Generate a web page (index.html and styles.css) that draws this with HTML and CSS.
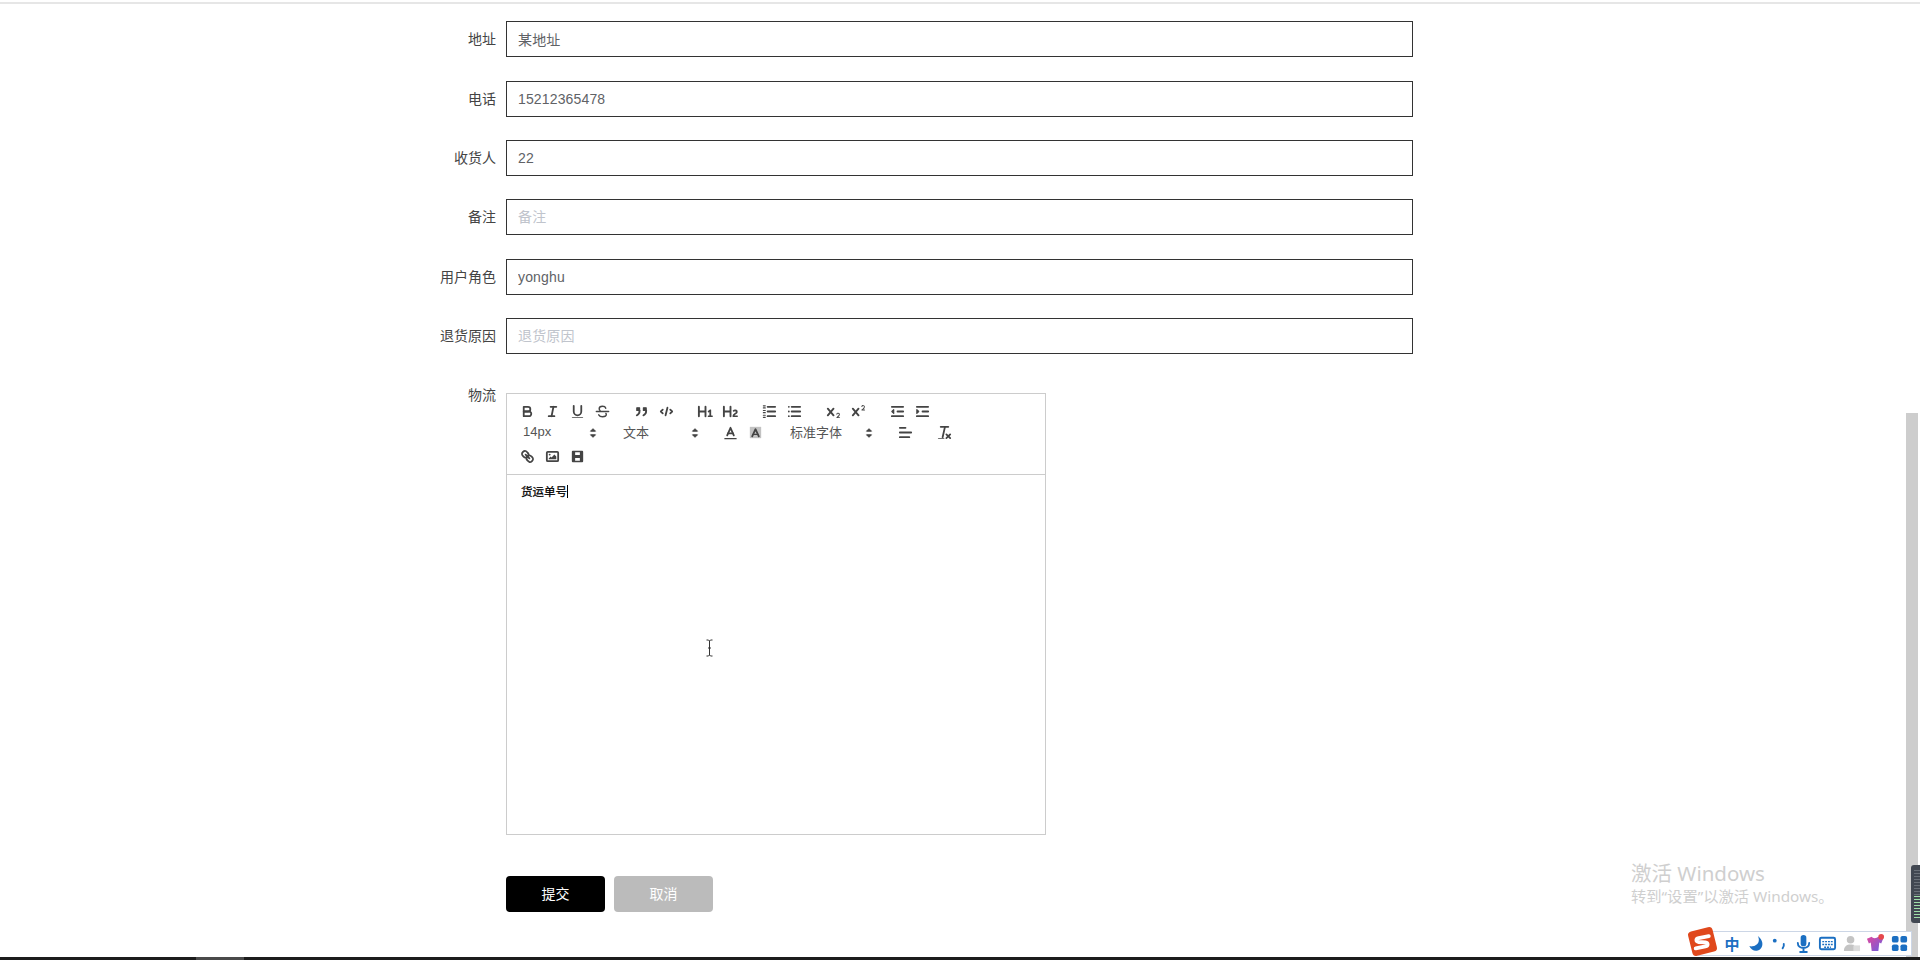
FILE: index.html
```html
<!DOCTYPE html>
<html lang="zh-CN">
<head>
<meta charset="utf-8">
<title>表单</title>
<link rel="stylesheet" href="styles.css">
</head>
<body>
<div class="page">
  <div class="topline"></div>
  <main class="form">
    <div class="row"><label class="label">地址</label><input class="input" value="某地址"></div>
    <div class="row"><label class="label">电话</label><input class="input" value="15212365478"></div>
    <div class="row"><label class="label">收货人</label><input class="input" value="22"></div>
    <div class="row"><label class="label">备注</label><input class="input" placeholder="备注"></div>
    <div class="row"><label class="label">用户角色</label><input class="input" value="yonghu"></div>
    <div class="row"><label class="label">退货原因</label><input class="input" placeholder="退货原因"></div>
    <div class="row row-editor">
      <label class="label">物流</label>
      <div class="editor">
        <div class="toolbar">
          <div class="tool-row">
            <div class="group">
              <button class="tb"><svg viewBox="0 0 18 18"><path class="st" d="M5,4H9.5A2.5,2.5,0,0,1,12,6.5v0A2.5,2.5,0,0,1,9.5,9H5V4Z"/><path class="st" d="M5,9h5.5A2.5,2.5,0,0,1,13,11.5v0A2.5,2.5,0,0,1,10.5,14H5V9Z"/></svg></button>
              <button class="tb"><svg viewBox="0 0 18 18"><line class="st" x1="7" x2="13" y1="4" y2="4"/><line class="st" x1="5" x2="11" y1="14" y2="14"/><line class="st" x1="8" x2="10" y1="14" y2="4"/></svg></button>
              <button class="tb"><svg viewBox="0 0 18 18"><path class="st" d="M5,3V9a4.012,4.012,0,0,0,4,4H9a4.012,4.012,0,0,0,4-4V3"/><rect class="fl" height="1" rx=".5" width="12" x="3" y="15"/></svg></button>
              <button class="tb"><svg viewBox="0 0 18 18"><line class="st mid" x1="15.5" x2="2.5" y1="9" y2="9"/><path class="st mid" d="M12.5 5.5C12 4 10.5 3.5 9 3.5c-2 0-3.5 1-3.5 2.5 0 .8.3 1.4.9 1.9"/><path class="st mid" d="M12.6 11c.2.4.4.8.4 1.2 0 1.6-1.800 2.300-4 2.300-1.700 0-3.200-.6-4-2"/></svg></button>
            </div>
            <div class="group">
              <button class="tb"><svg viewBox="0 0 18 18"><rect class="fl st thin" height="3" width="3" x="4" y="5"/><rect class="fl st thin" height="3" width="3" x="11" y="5"/><path class="st" d="M7,8c0,4.031-3,5-3,5"/><path class="st" d="M14,8c0,4.031-3,5-3,5"/></svg></button>
              <button class="tb"><svg viewBox="0 0 18 18"><polyline class="st" points="5 7 3 9 5 11"/><polyline class="st" points="13 7 15 9 13 11"/><line class="st" x1="10" x2="8" y1="5" y2="13"/></svg></button>
            </div>
            <div class="group">
              <button class="tb"><svg viewBox="0 0 18 18"><path class="fl" d="M10,4V14a1,1,0,0,1-2,0V10H3v4a1,1,0,0,1-2,0V4A1,1,0,0,1,3,4V8H8V4a1,1,0,0,1,2,0Zm6.06787,9.209H14.98975V7.59863a.54085.54085,0,0,0-.605-.60547h-.62744a1.01119,1.01119,0,0,0-.748.29688L11.645,8.56641a.5435.5435,0,0,0-.022.8584l.28613.30762a.53861.53861,0,0,0,.84717.0332l.09912-.08789a1.2137,1.2137,0,0,0,.2417-.35254h.02246s-.01123.30859-.01123.60547V13.209H12.041a.54085.54085,0,0,0-.605.60547v.43945a.54085.54085,0,0,0,.605.60547h4.02686a.54085.54085,0,0,0,.605-.60547v-.43945A.54085.54085,0,0,0,16.06787,13.209Z"/></svg></button>
              <button class="tb"><svg viewBox="0 0 18 18"><path class="fl" d="M16.73975,13.81445v.43945a.54085.54085,0,0,1-.605.60547H11.855a.58392.58392,0,0,1-.64893-.60547V14.0127c0-2.90527,3.39941-3.42187,3.39941-4.55469a.77675.77675,0,0,0-.84717-.78125,1.17684,1.17684,0,0,0-.83594.38477c-.2749.26367-.561.374-.85791.13184l-.4292-.34082c-.30811-.24219-.38525-.51758-.1543-.81445a2.97155,2.97155,0,0,1,2.45361-1.17676,2.45393,2.45393,0,0,1,2.68408,2.40918c0,2.45312-3.1792,2.92676-3.27832,3.93848h2.79443A.54085.54085,0,0,1,16.73975,13.81445ZM9,3A.99974.99974,0,0,0,8,4V8H3V4A1,1,0,0,0,1,4V14a1,1,0,0,0,2,0V10H8v4a1,1,0,0,0,2,0V4A.99974.99974,0,0,0,9,3Z"/></svg></button>
            </div>
            <div class="group">
              <button class="tb"><svg viewBox="0 0 18 18"><line class="st" x1="7" x2="15" y1="4" y2="4"/><line class="st" x1="7" x2="15" y1="9" y2="9"/><line class="st" x1="7" x2="15" y1="14" y2="14"/><line class="st thin" x1="2.5" x2="4.5" y1="3" y2="3"/><line class="st thin" x1="2.5" x2="4.5" y1="5.2" y2="5.2"/><line class="st thin" x1="2.5" x2="4.5" y1="8" y2="8"/><line class="st thin" x1="2.5" x2="4.5" y1="10.2" y2="10.2"/><line class="st thin" x1="2.5" x2="4.5" y1="13" y2="13"/><line class="st thin" x1="2.5" x2="4.5" y1="15.2" y2="15.2"/></svg></button>
              <button class="tb"><svg viewBox="0 0 18 18"><line class="st" x1="6" x2="15" y1="4" y2="4"/><line class="st" x1="6" x2="15" y1="9" y2="9"/><line class="st" x1="6" x2="15" y1="14" y2="14"/><line class="st" x1="3" x2="3" y1="4" y2="4"/><line class="st" x1="3" x2="3" y1="9" y2="9"/><line class="st" x1="3" x2="3" y1="14" y2="14"/></svg></button>
            </div>
            <div class="group">
              <button class="tb"><svg viewBox="0 0 18 18"><path class="fl" d="M15.5,15H13.861a3.858,3.858,0,0,0,1.914-2.975,1.8,1.8,0,0,0-1.6-1.751A1.921,1.921,0,0,0,12.021,11.7a0.50013,0.50013,0,1,0,.957.291h0a0.914,0.914,0,0,1,1.053-.725,0.81,0.81,0,0,1,.744.762c0,1.076-1.16971,1.86982-1.93971,2.43082A1.45639,1.45639,0,0,0,12,15.5a0.5,0.5,0,0,0,.5.5h3A0.5,0.5,0,0,0,15.5,15Z"/><path class="fl" d="M9.65,5.241a1,1,0,0,0-1.409.108L6,7.964,3.759,5.349A1,1,0,0,0,2.192,6.59178Q2.21541,6.6213,2.241,6.649L4.684,9.5,2.241,12.35A1,1,0,0,0,3.71,13.70722q0.02557-.02768.049-0.05722L6,11.036,8.241,13.65a1,1,0,1,0,1.567-1.24277Q9.78459,12.3777,9.759,12.35L7.316,9.5,9.759,6.651A1,1,0,0,0,9.65,5.241Z"/></svg></button>
              <button class="tb"><svg viewBox="0 0 18 18"><path class="fl" d="M15.5,7H13.861a4.015,4.015,0,0,0,1.914-2.975,1.8,1.8,0,0,0-1.6-1.751A1.922,1.922,0,0,0,12.021,3.7a0.5,0.5,0,1,0,.957.291,0.917,0.917,0,0,1,1.053-.725,0.81,0.81,0,0,1,.744.762c0,1.077-1.164,1.925-1.934,2.486A1.423,1.423,0,0,0,12,7.5a0.5,0.5,0,0,0,.5.5h3A0.5,0.5,0,0,0,15.5,7Z"/><path class="fl" d="M9.65,5.241a1,1,0,0,0-1.409.108L6,7.964,3.759,5.349A1,1,0,0,0,2.192,6.59178Q2.21541,6.6213,2.241,6.649L4.684,9.5,2.241,12.35A1,1,0,0,0,3.71,13.70722q0.02557-.02768.049-0.05722L6,11.036,8.241,13.65a1,1,0,1,0,1.567-1.24277Q9.78459,12.3777,9.759,12.35L7.316,9.5,9.759,6.651A1,1,0,0,0,9.65,5.241Z"/></svg></button>
            </div>
            <div class="group">
              <button class="tb"><svg viewBox="0 0 18 18"><line class="st" x1="3" x2="15" y1="14" y2="14"/><line class="st" x1="3" x2="15" y1="4" y2="4"/><line class="st" x1="9" x2="15" y1="9" y2="9"/><polyline class="fl st thin" points="5 7 5 11 3 9 5 7"/></svg></button>
              <button class="tb"><svg viewBox="0 0 18 18"><line class="st" x1="3" x2="15" y1="14" y2="14"/><line class="st" x1="3" x2="15" y1="4" y2="4"/><line class="st" x1="9" x2="15" y1="9" y2="9"/><polyline class="fl st thin" points="3 7 3 11 5 9 3 7"/></svg></button>
            </div>
          </div>
          <div class="tool-row tool-row-2">
            <div class="picker picker-size"><span>14px</span><svg viewBox="0 0 18 18"><polygon class="arrow" points="6.500 10.800 9 13.300 11.500 10.800"/><polygon class="arrow" points="6.500 7.200 9 4.700 11.500 7.200"/></svg></div>
            <div class="picker picker-header"><span>文本</span><svg viewBox="0 0 18 18"><polygon class="arrow" points="6.500 10.800 9 13.300 11.500 10.800"/><polygon class="arrow" points="6.500 7.200 9 4.700 11.500 7.200"/></svg></div>
            <div class="group group-color">
              <button class="tb"><svg viewBox="0 0 18 18"><line class="st thin" x1="3" x2="15" y1="15.5" y2="15.5"/><polyline class="st" points="5.5 12 9 4 12.5 12"/><line class="st" x1="11.63" x2="6.38" y1="10" y2="10"/></svg></button>
              <button class="tb"><svg viewBox="0 0 18 18"><rect class="dots" x="3" y="3" width="12" height="12"/><polyline class="st" points="5.5 13 9 5.5 12.5 13"/><line class="st thin" x1="11.5" x2="6.5" y1="11" y2="11"/></svg></button>
            </div>
            <div class="picker picker-font"><span>标准字体</span><svg viewBox="0 0 18 18"><polygon class="arrow" points="6.500 10.800 9 13.300 11.500 10.800"/><polygon class="arrow" points="6.500 7.200 9 4.700 11.500 7.200"/></svg></div>
            <div class="group group-align">
              <button class="tb"><svg viewBox="0 0 18 18"><line class="st" x1="3" x2="15" y1="9" y2="9"/><line class="st" x1="3" x2="13" y1="14" y2="14"/><line class="st" x1="3" x2="9" y1="4" y2="4"/></svg></button>
            </div>
            <div class="group">
              <button class="tb"><svg viewBox="0 0 18 18"><line class="st" x1="5" x2="13" y1="3" y2="3"/><line class="st" x1="9.5" x2="7" y1="3" y2="14"/><line class="st" x1="11" x2="15" y1="11" y2="15"/><line class="st" x1="15" x2="11" y1="11" y2="15"/><rect class="fl" height="1" rx=".5" width="7" x="2" y="15"/></svg></button>
            </div>
          </div>
          <div class="tool-row tool-row-3">
            <button class="tb"><svg viewBox="0 0 18 18"><line class="st" x1="7" x2="11" y1="7" y2="11"/><path class="st" d="M8.9,4.577a3.476,3.476,0,0,1,.36,4.679A3.476,3.476,0,0,1,4.577,8.9C3.185,7.5,2.035,6.4,4.217,4.217S7.5,3.185,8.9,4.577Z"/><path class="st" d="M13.423,9.1a3.476,3.476,0,0,0-4.679-.36,3.476,3.476,0,0,0,.36,4.679c1.392,1.392,2.5,2.542,4.679.36S14.815,10.5,13.423,9.1Z"/></svg></button>
            <button class="tb"><svg viewBox="0 0 18 18"><rect class="st" height="10" width="12" x="3" y="4" rx="1"/><circle class="fl" cx="6" cy="7" r="1"/><polyline class="fl" points="5 12 5 11 7 9 8 10 11 7 13 9 13 12 5 12"/></svg></button>
            <button class="tb"><svg viewBox="0 0 18 18"><path class="fl" fill-rule="evenodd" d="M4 3h10a1 1 0 0 1 1 1v10a1 1 0 0 1-1 1H4a1 1 0 0 1-1-1V4a1 1 0 0 1 1-1Zm2.5 1.5v3h5v-3Zm0 6v3h5v-3Z"/></svg></button>
          </div>
        </div>
        <div class="content"><p class="content-text">货运单号<span class="caret"></span></p></div>
      </div>
    </div>
    <div class="actions">
      <button class="btn btn-primary">提交</button>
      <button class="btn btn-cancel">取消</button>
    </div>
  </main>
  <div class="taskbar"><span class="task-item"></span></div>

  <div class="scrollbar"></div>
  <svg class="ibeam" viewBox="0 0 9 18"><path d="M1.5 1h2l1 1 1-1h2M4.5 2v14M1.5 17h2l1-1 1 1h2M3 9h3"/></svg>
  <div class="watermark">
    <div class="wm-title">激活 Windows</div>
    <div class="wm-sub">转到“设置”以激活 Windows。</div>
  </div>
  <div class="meter">
    <div class="meter-dim"></div>
    <div class="meter-green"></div>
  </div>
  <div class="ime">
    <svg class="ime-logo" viewBox="0 0 32 32"><rect x="3" y="3" width="26" height="26" rx="4" transform="rotate(-14 16 16)"/><path d="M22.5 10.5 12 12.5c-3 .6-3 3.6 0 4l7 .4c3 .4 3 3.6 0 4.2L9 23"/></svg>
    <span class="ime-zh">中</span>
    <svg class="ime-icon" viewBox="0 0 20 20"><path class="ime-fill" d="M12.5 2c2.5 5 .5 10-6 11-1 .1-2 0-3-.4C5 16.5 8.5 18 11.500 17.500c5-.8 7-6 5-10.500-.9-2-2.500-4-4-5Z"/></svg>
    <svg class="ime-icon" viewBox="0 0 20 20"><circle class="ime-fill" cx="5" cy="7" r="2"/><path class="ime-line" d="M14.500 10.500c.4 1.800-.1 3.300-1.200 4.500"/></svg>
    <svg class="ime-icon" viewBox="0 0 20 20"><rect class="ime-fill" x="7" y="1" width="6" height="12" rx="3"/><path class="ime-line" d="M4 9.500c0 7 12 7 12 0M10 15v4M6.500 19h7"/></svg>
    <svg class="ime-icon" viewBox="0 0 20 20"><rect class="ime-line" x="2" y="4" width="16" height="12" rx="1.500"/><path class="ime-dash" d="M4.500 8h11M4.500 11h11M6.500 14h7"/></svg>
    <svg class="ime-icon" viewBox="0 0 20 20"><circle class="ime-grey" cx="9" cy="6" r="4"/><path class="ime-grey" d="M2 18c0-5 3-7 7-7s4 1 4 2v5Z"/><rect class="ime-grey-light" x="12" y="12" width="7" height="6"/></svg>
    <svg class="ime-icon" viewBox="0 0 20 20"><defs><linearGradient id="shirt" x1="0" y1="0" x2="1" y2="1"><stop offset="0" stop-color="#e0479e"/><stop offset="1" stop-color="#6a5fe0"/></linearGradient></defs><path fill="url(#shirt)" d="M1 5l5-2c1 2 5 2 7 0l5 2-2 5-2-1-1 9H6L5 9 3 10Z"/><circle class="ime-dot" cx="16" cy="3" r="3"/></svg>
    <svg class="ime-icon" viewBox="0 0 20 20"><rect class="ime-fill" x="2" y="2" width="7" height="7" rx="2"/><rect class="ime-fill" x="11" y="2" width="7" height="7" rx="2"/><rect class="ime-fill" x="2" y="11" width="7" height="7" rx="2"/><rect class="ime-fill" x="11" y="11" width="7" height="7" rx="2"/></svg>
  </div>
</div>
</body>
</html>
```

FILE: styles.css
```css
* { box-sizing: border-box; }
html, body { margin: 0; padding: 0; background: #fff; }
body { font-family: "Liberation Sans", "Noto Sans CJK SC", sans-serif; font-size: 14px; color: #333; }
.page { position: relative; display: flex; flex-direction: column; height: 960px; overflow: hidden; }
.topline { height: 2px; margin-top: 2px; background: #e6e6e6; }

.form { padding: 17.2px 0 0 400px; }
.row { display: flex; gap: 10px; margin-bottom: 23.4px; }
.label { width: 96px; flex: none; line-height: 36px; text-align: right; color: #444; font-size: 14px; }
.row-editor .label { line-height: 34px; }
.input { width: 907px; height: 36px; padding: 0 11px; border: 1px solid #333; border-radius: 0; outline: none; background: #fff; font: 14px "Liberation Sans", "Noto Sans CJK SC", sans-serif; letter-spacing: .15px; color: #606266; }
.input::placeholder { color: #c0c4cc; opacity: 1; }

.editor { width: 540px; height: 442px; margin-top: 15.4px; border: 1px solid #ccc; display: flex; flex-direction: column; }
.toolbar { height: 81px; flex: none; padding: 7px 0 0 8px; border-bottom: 1px solid #ccc; }
.tool-row { display: flex; align-items: center; height: 22px; }
.tool-row-2 { height: 20px; }
.tool-row-3 { height: 25px; margin-top: 1px; }
.group { display: flex; margin-right: 14px; }
.group-color { margin-right: 14.5px; }
.group-align { margin-right: 14px; }
.tb { width: 25px; height: 20px; padding: 0; border: 0; background: none; display: flex; align-items: center; justify-content: center; }
.tb svg { width: 17px; height: 17px; display: block; }
.st { fill: none; stroke: #444; stroke-width: 1.9; stroke-linecap: round; stroke-linejoin: round; }
.st.mid { stroke-width: 1.5; }
.st.thin { stroke-width: 1.2; }
.fl { fill: #444; }
.dots { fill: #c2c2c2; }
.arrow { fill: #444; stroke: #444; stroke-width: 1; stroke-linejoin: round; }

.picker { display: flex; align-items: center; justify-content: space-between; height: 20px; padding-left: 8px; font-size: 13px; color: #555; }
.picker span { padding-bottom: 2px; }
.picker svg { width: 18px; height: 18px; margin-right: 2px; }
.picker-size { width: 89px; margin-right: 11px; }
.picker-header { width: 91px; margin-right: 11.5px; }
.picker-font { width: 98px; margin-right: 12.5px; }

.content { flex: 1; padding: 8px 10px 0 10px; }
.content-text { margin: 0; padding-left: 4px; font-size: 11.5px; line-height: 18px; color: #000; -webkit-text-stroke: .25px #000; }
.caret { display: inline-block; width: 1px; height: 13px; background: #000; vertical-align: -2px; }

.actions { display: flex; gap: 9px; margin: 0 0 0 106px; padding-top: 18.1px; }
.btn { width: 99px; height: 36px; padding: 0 0 2px; border: 0; border-radius: 4px; font: 14px "Liberation Sans", "Noto Sans CJK SC", sans-serif; color: #fff; }
.btn-primary { background: #000; }
.btn-cancel { background: #bbb; }

.taskbar { margin-top: auto; height: 3px; background: #1c1c1c; padding-left: 196px; }
.task-item { display: block; width: 48px; height: 3px; background: #4a4a4a; }

.scrollbar { position: absolute; left: 1906px; top: 413px; width: 12px; height: 544px; background: #cdcdcd; }
.ibeam { position: absolute; left: 705px; top: 639px; width: 9px; height: 18px; fill: none; stroke: #333; stroke-width: 1; }
.watermark { position: absolute; left: 1631px; top: 860px; font-family: "Noto Sans", "Noto Sans CJK SC", sans-serif; color: #cfcfcf; }
.wm-title { font-size: 20.5px; line-height: 26px; }
.wm-sub { font-size: 15.3px; line-height: 20px; }

.meter { position: absolute; left: 1911px; top: 865px; width: 9px; height: 58px; padding: 5px 0 0 3px; background: #424852; border-radius: 3px 0 0 3px; }
.meter-dim { width: 6px; height: 26px; background: repeating-linear-gradient(#6a7078 0 1px, #424852 1px 3px); }
.meter-green { width: 6px; height: 24px; background: repeating-linear-gradient(#9fe0a8 0 1px, #424852 1px 3px); }

.ime { position: absolute; left: 1696px; top: 931px; width: 216px; height: 25px; display: flex; align-items: center; padding-left: 26px; gap: 5px; background: #fff; border: 1px solid #ccd6e6; }
.ime-logo { position: absolute; left: -10px; top: -6px; width: 31px; height: 31px; }
.ime-logo rect { fill: #e0481c; }
.ime-logo path { fill: none; stroke: #fff; stroke-width: 4; stroke-linecap: round; stroke-linejoin: round; }
.ime-zh { width: 18px; font: bold 15px "Noto Sans CJK SC", sans-serif; color: #1b6fc2; text-align: center; }
.ime-icon { width: 19px; height: 19px; flex: none; }
.ime-fill { fill: #1b6fc2; }
.ime-line { fill: none; stroke: #1b6fc2; stroke-width: 2; stroke-linecap: round; }
.ime-dash { fill: none; stroke: #1b6fc2; stroke-width: 1.5; stroke-dasharray: 2 1; }
.ime-grey { fill: #c4c4c4; }
.ime-grey-light { fill: #dcdcdc; }
.ime-dot { fill: #e5484d; }
```
